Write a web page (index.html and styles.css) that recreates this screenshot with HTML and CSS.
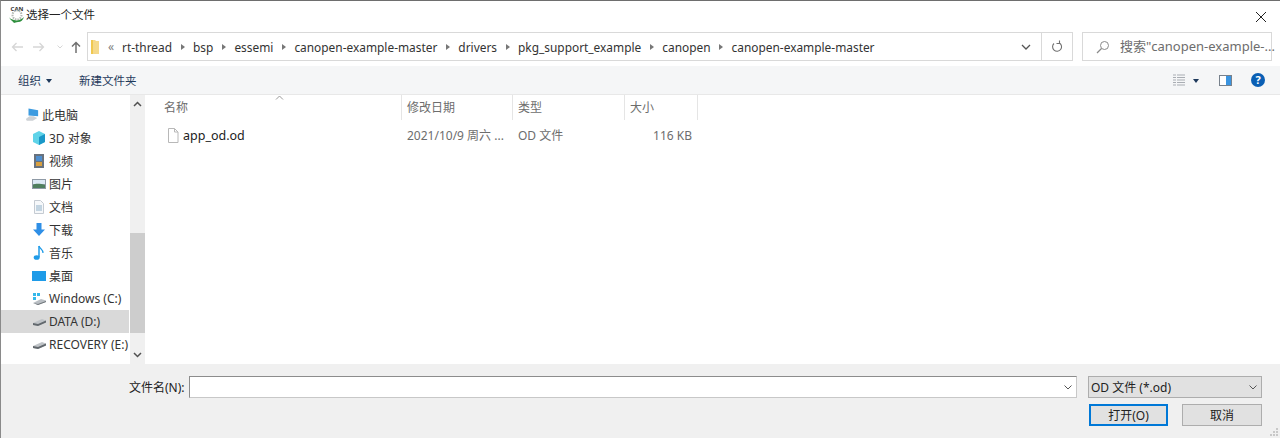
FILE: index.html
```html
<!DOCTYPE html>
<html lang="zh">
<head>
<meta charset="utf-8">
<title>选择一个文件</title>
<link rel="stylesheet" href="styles.css">
</head>
<body>
<div class="window">
  <header class="titlebar">
    <svg class="app-icon" width="18" height="18" viewBox="0 0 18 18"><text x="9" y="5.500" text-anchor="middle" class="logo-text">CAN</text><circle cx="9" cy="10" r="4.500" fill="none" stroke="#b4bab4" stroke-width="2" stroke-dasharray="1.500 1"/><path d="M1 12c1 2 3 2 5 3 3 1 7 0 10-3-1 3-3 5-6 5-2 0-3 1-4 1-1-2-4-3-5-6z" fill="#2f8f3e"/></svg>
    <span class="title">选择一个文件</span>
    <svg class="close" width="12" height="12" viewBox="0 0 12 12"><path d="M1 1l10 10M11 1L1 11" stroke="#222" stroke-width="1"/></svg>
  </header>

  <div class="addressrow">
    <div class="navbtns">
      <svg width="12" height="10" viewBox="0 0 12 10"><path d="M12 5H1.500M5.500 1L1.500 5l4 4" fill="none" stroke="#d6d6d6" stroke-width="1.300"/></svg>
      <svg width="12" height="10" viewBox="0 0 12 10"><path d="M0 5h10.500M6.500 1l4 4-4 4" fill="none" stroke="#d6d6d6" stroke-width="1.300"/></svg>
      <svg width="6" height="4" viewBox="0 0 6 4"><path d="M0.500 0.500L3 3l2.500-2.500" fill="none" stroke="#d6d6d6"/></svg>
      <svg class="up" width="10" height="12" viewBox="0 0 10 12"><path d="M5 12V1.500M1 5.500l4-4 4 4" fill="none" stroke="#707070" stroke-width="1.500"/></svg>
    </div>
    <div class="addressbar">
      <svg class="folder" width="9" height="16" viewBox="0 0 9 16"><path d="M0 1h4l1 1h3v13H0z" fill="#f5d98a"/><path d="M0 1h2v14H0z" fill="#f0c850"/></svg>
      <span class="crumb-more">«</span>
      <nav class="crumbs">
        <span>rt-thread</span><i class="sep"></i>
        <span>bsp</span><i class="sep"></i>
        <span>essemi</span><i class="sep"></i>
        <span>canopen-example-master</span><i class="sep"></i>
        <span>drivers</span><i class="sep"></i>
        <span>pkg_support_example</span><i class="sep"></i>
        <span>canopen</span><i class="sep"></i>
        <span>canopen-example-master</span>
      </nav>
      <svg class="addr-chevron" width="10" height="6" viewBox="0 0 10 6"><path d="M1 1l4 4 4-4" fill="none" stroke="#555" stroke-width="1.300"/></svg>
      <div class="refresh">
        <svg width="12" height="13" viewBox="0 0 12 13"><path d="M8.500 3A4.500 4.500 0 1 1 3 3.500M8.500 0.500V3.500H5.500" fill="none" stroke="#707070" stroke-width="1.100"/></svg>
      </div>
    </div>
    <div class="searchbox">
      <svg width="14" height="14" viewBox="0 0 14 14"><circle cx="8.500" cy="5.500" r="4" fill="none" stroke="#8a8a8a"/><path d="M5.500 8.500L1 13" stroke="#8a8a8a" stroke-width="1.200"/></svg>
      <span>搜索"canopen-example-...</span>
    </div>
  </div>

  <div class="toolbar">
    <span class="tool">组织<i class="caret"></i></span>
    <span class="tool new">新建文件夹</span>
    <div class="tool-right">
      <svg width="12" height="12" viewBox="0 0 12 12"><path d="M0 1h3M4 1h8M0 3.500h3M4 3.500h8M0 6h3M4 6h8M0 8.500h3M4 8.500h8M0 11h3M4 11h8" stroke="#a9adb3"/></svg>
      <i class="caret view-caret"></i>
      <svg class="pane" width="13" height="11" viewBox="0 0 13 11"><rect x="0.500" y="0.500" width="12" height="10" fill="#fff" stroke="#77818c"/><rect x="7" y="1" width="5" height="9" fill="#3a94e0"/></svg>
      <svg class="help" width="14" height="14" viewBox="0 0 14 14"><circle cx="7" cy="7" r="7" fill="#0a5fb4"/><text x="7" y="11" text-anchor="middle" class="help-q">?</text></svg>
    </div>
  </div>

  <main class="main">
    <aside class="navpane">
      <ul class="tree">
        <li class="node root"><svg width="14" height="13" viewBox="0 0 16 14"><path d="M4 0l11 2v7L4 8z" fill="#3d9be0"/><path d="M1 12l4-3h5l2 1 2 1-5 3H2z" fill="#cdd1d5"/></svg><span>此电脑</span></li>
        <li class="node"><svg width="14" height="14" viewBox="0 0 14 14"><path d="M7 0l6 3v8l-6 3-6-3V3z" fill="#5fd3e8"/><path d="M7 6l6-3v8l-6 3z" fill="#1a98c8"/></svg><span>3D 对象</span></li>
        <li class="node"><svg width="14" height="14" viewBox="0 0 14 14"><rect x="2" y="0" width="10" height="14" fill="#68727e"/><rect x="4" y="2" width="6" height="5" fill="#4f8fcf"/><rect x="4" y="8" width="6" height="4" fill="#d8a040"/></svg><span>视频</span></li>
        <li class="node"><svg width="14" height="14" viewBox="0 0 14 14"><rect x="0" y="2" width="14" height="10" fill="#8f9aa6"/><rect x="1" y="3" width="12" height="4" fill="#dce9f5"/><path d="M1 8c3-2 8-1 12 0v3H1z" fill="#4f7f5e"/></svg><span>图片</span></li>
        <li class="node"><svg width="14" height="14" viewBox="0 0 14 14"><path d="M2.500 0.500h6l3 3v10h-9z" fill="#f6f8fa" stroke="#c5cbd2"/><path d="M4 6h6M4 8h6M4 10h6" stroke="#8fb0c8"/></svg><span>文档</span></li>
        <li class="node"><svg width="14" height="14" viewBox="0 0 14 14"><path d="M4.500 0h5v6.500H13L7 13 1 6.500h3.500z" fill="#2f8fe6"/></svg><span>下载</span></li>
        <li class="node"><svg width="14" height="16" viewBox="0 0 14 16"><path d="M7 1v11" stroke="#1f9be8" stroke-width="1.500"/><path d="M7 1c1 3 4 3 4 7" fill="none" stroke="#1f9be8" stroke-width="1.200"/><ellipse cx="4.700" cy="12.500" rx="3" ry="2.300" fill="#1f9be8"/></svg><span>音乐</span></li>
        <li class="node"><svg width="14" height="14" viewBox="0 0 14 14"><rect x="0" y="2" width="14" height="10" fill="#1e9be8"/></svg><span>桌面</span></li>
        <li class="node drive"><svg width="15" height="14" viewBox="0 0 15 14"><path d="M1 1h3v3H1zM5 1h3v3H5zM1 5h3v3H1z" fill="#35b8ea"/><path d="M1 11l8-4 5 1.500v1.500l-8 3z" fill="#b9bec3"/><path d="M1 11l5 1 8-3v1l-8 3z" fill="#6d7378"/></svg><span>Windows (C:)</span></li>
        <li class="node drive selected"><svg width="15" height="10" viewBox="0 0 15 10"><path d="M1 6l9-4 4 1.500v2l-8 3.500-5-1z" fill="#bfc3c7"/><path d="M1 6l5 1 8-3.500v2L6 9l-5-1z" fill="#62686d"/></svg><span>DATA (D:)</span></li>
        <li class="node drive"><svg width="15" height="10" viewBox="0 0 15 10"><path d="M1 6l9-4 4 1.500v2l-8 3.500-5-1z" fill="#bfc3c7"/><path d="M1 6l5 1 8-3.500v2L6 9l-5-1z" fill="#62686d"/></svg><span>RECOVERY (E:)</span></li>
      </ul>
      <div class="scrollbar">
        <svg class="sb-arrow" width="9" height="6" viewBox="0 0 9 6"><path d="M1 5l3.500-3.500L8 5" fill="none" stroke="#505050" stroke-width="1.500"/></svg>
        <div class="sb-track"><div class="sb-thumb"></div></div>
        <svg class="sb-arrow" width="9" height="6" viewBox="0 0 9 6"><path d="M1 1l3.500 3.500L8 1" fill="none" stroke="#505050" stroke-width="1.500"/></svg>
      </div>
    </aside>
    <section class="files">
      <div class="head">
        <div class="col c-name"><svg class="sort" width="9" height="5" viewBox="0 0 9 5"><path d="M1 4.500L4.500 1 8 4.500" fill="none" stroke="#9a9a9a"/></svg>名称</div>
        <div class="col c-date">修改日期</div>
        <div class="col c-type">类型</div>
        <div class="col c-size">大小</div>
      </div>
      <div class="row">
        <div class="cell c-name name"><svg width="12" height="15" viewBox="0 0 12 15"><path d="M1.500 0.500h6l3.500 3.500v10.500h-9.500z" fill="#fff" stroke="#b8b8b8"/><path d="M7.500 0.500V4H11" fill="none" stroke="#b8b8b8"/></svg><span>app_od.od</span></div>
        <div class="cell c-date">2021/10/9 周六 ...</div>
        <div class="cell c-type">OD 文件</div>
        <div class="cell c-size size">116 KB</div>
      </div>
    </section>
  </main>

  <footer class="footer">
    <div class="line">
      <label class="label">文件名(N):</label>
      <div class="nameinput"><svg width="8" height="5" viewBox="0 0 8 5"><path d="M0.500 0.500L4 4l3.500-3.500" fill="none" stroke="#555"/></svg></div>
      <div class="typeselect"><span>OD 文件 (*.od)</span><svg width="8" height="5" viewBox="0 0 8 5"><path d="M0.500 0.500L4 4l3.500-3.500" fill="none" stroke="#555"/></svg></div>
    </div>
    <div class="buttons">
      <button class="btn primary">打开(O)</button>
      <button class="btn">取消</button>
    </div>
    <svg class="grip" width="10" height="10" viewBox="0 0 10 10"><path d="M7 1h2v2H7zM4 4h2v2H4zM7 4h2v2H7zM1 7h2v2H1zM4 7h2v2H4zM7 7h2v2H7z" fill="#c8c8c8"/></svg>
  </footer>
</div>
</body>
</html>
```
FILE: styles.css
```css
* { box-sizing: border-box; }
html, body { margin: 0; padding: 0; }
body { width: 1280px; height: 438px; overflow: hidden; background: #fff; font-family: "Noto Sans", "Noto Sans CJK SC", sans-serif; font-size: 12px; color: #333; }
ul { list-style: none; margin: 0; padding: 0; }
i { display: block; }
svg { display: block; flex: none; }

.window { width: 1280px; height: 438px; display: flex; flex-direction: column; border-top: 1px solid #6e6e6e; border-left: 1px solid #8a8a8a; }

.titlebar { height: 31px; flex: none; display: flex; align-items: center; padding: 0 13px 6px 7px; }
.logo-text { font-size: 6px; font-weight: 700; fill: #333; }
.title { margin-left: 0; font-size: 11.500px; color: #222; }
.close { margin-left: auto; margin-top: 6px; }

.addressrow { height: 29px; flex: none; display: flex; align-items: center; padding-right: 7px; }
.navbtns { width: 86px; flex: none; display: flex; align-items: center; padding-left: 10px; }
.navbtns svg:nth-child(2) { margin-left: 10px; }
.navbtns svg:nth-child(3) { margin-left: 12px; }
.navbtns .up { margin-left: 8px; }
.addressbar { width: 986px; height: 29px; border: 1px solid #d9d9d9; display: flex; align-items: center; padding-left: 3px; }
.folder { margin-right: 8px; }
.crumb-more { color: #808080; width: 14px; flex: none; font-size: 12px; }
.crumbs { display: flex; align-items: center; font-size: 11.900px; color: #333; white-space: nowrap; }
.sep { width: 4px; height: 6px; margin: 0 8.500px; border-left: 4px solid #777; border-top: 3px solid transparent; border-bottom: 3px solid transparent; }
.addr-chevron { margin-left: auto; margin-right: 10px; }
.refresh { width: 31px; height: 27px; flex: none; border-left: 1px solid #d9d9d9; display: flex; align-items: center; justify-content: center; }
.searchbox { width: 190px; height: 29px; margin-left: 9px; border: 1px solid #d9d9d9; display: flex; align-items: center; padding-left: 13px; color: #6d6d6d; font-size: 13px; white-space: nowrap; }
.searchbox span { margin-left: 10px; margin-bottom: 2px; }

.toolbar { height: 29px; flex: none; margin-top: 5px; background: #f5f6f7; border-bottom: 1px solid #e8e8e8; display: flex; align-items: center; padding-left: 17px; color: #1e395b; font-size: 11.500px; }
.tool { display: flex; align-items: center; }
.tool.new { margin-left: 27px; }
.caret { width: 0; height: 0; margin-left: 5px; margin-top: 1px; border-left: 3.500px solid transparent; border-right: 3.500px solid transparent; border-top: 4px solid #1e395b; }
.tool-right { margin-left: auto; display: flex; align-items: center; padding-right: 15px; }
.view-caret { margin-left: 8px; }
.pane { margin-left: 20px; }
.help { margin-left: 19px; }
.help-q { fill: #fff; font-size: 11px; font-weight: 700; }

.main { flex: 1; min-height: 0; display: flex; }
.navpane { width: 144px; flex: none; display: flex; }
.tree { width: 128px; flex: none; padding-top: 8px; overflow: hidden; }
.node { height: 23px; display: flex; align-items: center; padding-left: 31px; white-space: nowrap; color: #333; }
.node svg { margin-right: 3px; }
.node.drive svg { margin-right: 2px; }
.node.root { padding-left: 24px; }
.node.selected { background: #d9d9d9; }
.scrollbar { width: 15px; margin-left: 1px; flex: none; background: #f0f0f0; display: flex; flex-direction: column; align-items: center; }
.sb-arrow { margin: 6px 0; }
.sb-track { flex: 1; width: 100%; padding-top: 120px; padding-bottom: 13px; }
.sb-thumb { height: 100%; background: #cdcdcd; }

.files { flex: 1; min-width: 0; position: relative; }
.head { height: 25px; display: flex; color: #6d6d6d; }
.row { height: 22px; margin-top: 4px; display: flex; align-items: center; color: #6d6d6d; }
.c-name { width: 257px; padding-left: 19px; }
.c-date { width: 111px; padding-left: 5px; }
.c-type { width: 112px; padding-left: 5px; }
.c-size { width: 73px; padding-left: 5px; }
.col { border-right: 1px solid #e5e5e5; display: flex; align-items: center; position: relative; padding-bottom: 2px; }
.sort { position: absolute; left: 130px; top: 0; }
.name { display: flex; align-items: center; padding-left: 22px; color: #222; font-size: 12.500px; }
.name span { margin-left: 4px; }
.size { text-align: right; padding-right: 6px; }

.footer { height: 74px; flex: none; background: #f0f0f0; padding: 12px 18px 0 0; position: relative; }
.line { display: flex; align-items: center; height: 22px; }
.label { margin-left: 128px; width: 60px; flex: none; white-space: nowrap; color: #222; }
.nameinput { width: 888px; height: 22px; flex: none; background: #fff; border: 1px solid #8c8c8c; border-bottom-color: #c8c8c8; border-right-color: #c8c8c8; display: flex; align-items: center; justify-content: flex-end; padding-right: 4px; }
.typeselect { width: 174px; height: 22px; flex: none; margin-left: 11px; background: #e1e1e1; border: 1px solid #adadad; display: flex; align-items: center; justify-content: space-between; padding: 0 4px 0 2px; color: #222; }
.buttons { display: flex; justify-content: flex-end; gap: 14px; margin-top: 6px; }
.btn { width: 80px; height: 22px; padding: 0; background: #e1e1e1; border: 1px solid #adadad; font: inherit; color: #222; }
.btn.primary { border: 2px solid #0078d7; width: 79px; }
.grip { position: absolute; right: 1px; bottom: 1px; }
```
